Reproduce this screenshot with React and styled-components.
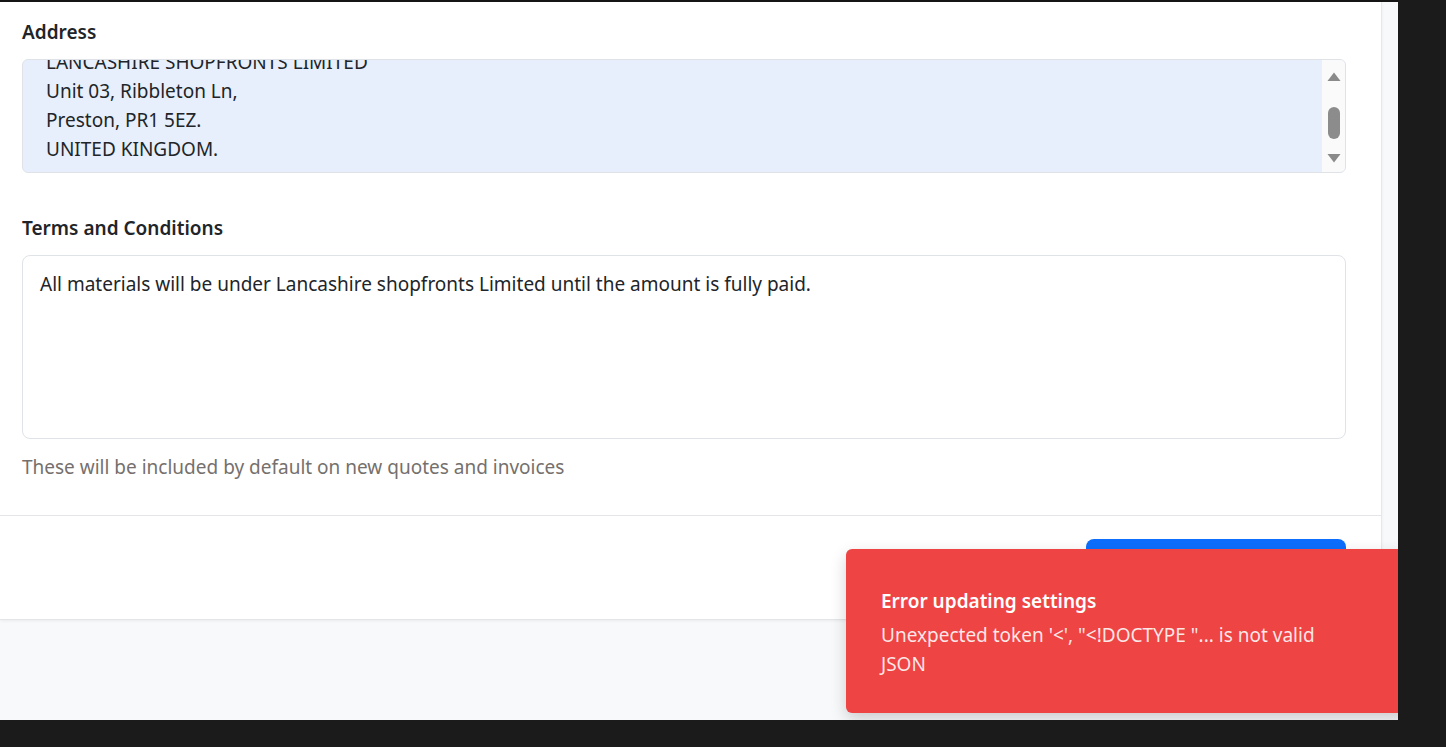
import React, { useLayoutEffect, useRef } from 'react';
import styled, { createGlobalStyle } from 'styled-components';

const GlobalStyle = createGlobalStyle`
  html, body {
    margin: 0;
    padding: 0;
    background: #1b1b1b;
    font-family: "Noto Sans", "Open Sans", Arial, sans-serif;
    color: #212529;
  }
  * { box-sizing: border-box; }
`;

const Desktop = styled.div`
  width: 1446px;
  height: 747px;
  background: #1b1b1b;
  overflow: hidden;
`;

const Window = styled.div`
  position: relative;
  width: 1398px;
  height: 720px;
  border-top: 2px solid #151515;
  background: #f8f9fb;
  overflow: hidden;
`;

const Card = styled.div`
  width: 1382px;
  background: #fff;
  border-right: 1px solid #e6e8eb;
  border-bottom: 1px solid #e3e5e8;
  box-shadow: 0 1px 3px rgba(0, 0, 0, 0.06);
`;

const Body = styled.div`
  padding: 17px 35px 34px 22px;
`;

const Label = styled.div`
  font-size: 19px;
  line-height: 27px;
  font-weight: 600;
  color: #212529;
  margin-top: ${p => p.$top || 0}px;
  margin-bottom: 13px;
`;

const AddressBox = styled.div`
  display: flex;
  height: 114px;
  border: 1px solid #dfe3e8;
  border-radius: 6px;
  overflow: hidden;
  background: #e8effc;
`;

const AddressText = styled.div`
  flex: 1;
  overflow: hidden;
  padding: 12px 23px;
  font-size: 19px;
  line-height: 29px;
  white-space: pre-line;
  color: #212529;
`;

const Scrollbar = styled.div`
  width: 23px;
  background: #fafafa;
  display: flex;
  flex-direction: column;
  align-items: center;
  padding: 12px 0 9px;
`;

const Thumb = styled.div`
  width: 12px;
  height: 32px;
  border-radius: 6px;
  background: #8c8c8c;
  margin: 25px 0 auto;
`;

const TermsBox = styled.div`
  height: 184px;
  border: 1px solid #dfe3e8;
  border-radius: 8px;
  padding: 14px 17px;
  font-size: 19px;
  line-height: 29px;
  color: #212529;
`;

const Helper = styled.div`
  margin-top: 15px;
  font-size: 19px;
  line-height: 27px;
  color: #75706d;
`;

const Footer = styled.div`
  border-top: 1px solid #e3e5e8;
  padding: 23px 35px 23px 22px;
  display: flex;
  justify-content: flex-end;
`;

const SaveButton = styled.button`
  width: 260px;
  height: 57px;
  border: none;
  border-radius: 8px;
  background: #0d6efd;
  color: #fff;
  font-family: inherit;
  font-size: 19px;
  font-weight: 600;
`;

const Toast = styled.div`
  position: absolute;
  left: 846px;
  bottom: 7px;
  width: 564px;
  padding: 37px 35px 34px;
  background: #ef4444;
  border-radius: 6px;
  box-shadow: 0 6px 16px rgba(0, 0, 0, 0.18);
  color: #fff;
`;

const ToastTitle = styled.div`
  font-size: 19px;
  line-height: 30px;
  font-weight: 600;
  margin-bottom: 5px;
`;

const ToastMessage = styled.div`
  max-width: 455px;
  font-size: 19px;
  line-height: 29px;
  color: rgba(255, 255, 255, 0.88);
`;

const Arrow = ({ down }) => (
  <svg width="14" height="10" viewBox="0 0 14 10">
    <path d={down ? 'M0.5 1h13L7 9.5z' : 'M0.5 9h13L7 0.5z'} fill="#8a8a8a" />
  </svg>
);

const address = `LANCASHIRE SHOPFRONTS LIMITED
Unit 03, Ribbleton Ln,
Preston, PR1 5EZ.
UNITED KINGDOM.`;

export default function App() {
  const ref = useRef(null);
  useLayoutEffect(() => {
    if (ref.current) ref.current.scrollTop = 24;
  }, []);

  return (
    <Desktop>
      <GlobalStyle />
      <Window>
        <Card>
          <Body>
            <Label>Address</Label>
            <AddressBox>
              <AddressText ref={ref}>{address}</AddressText>
              <Scrollbar>
                <Arrow />
                <Thumb />
                <Arrow down />
              </Scrollbar>
            </AddressBox>

            <Label $top={42}>Terms and Conditions</Label>
            <TermsBox>
              All materials will be under Lancashire shopfronts Limited until the amount is fully paid.
            </TermsBox>
            <Helper>These will be included by default on new quotes and invoices</Helper>
          </Body>
          <Footer>
            <SaveButton>Save Settings</SaveButton>
          </Footer>
        </Card>

        <Toast>
          <ToastTitle>Error updating settings</ToastTitle>
          <ToastMessage>Unexpected token '&lt;', "&lt;!DOCTYPE "... is not valid JSON</ToastMessage>
        </Toast>
      </Window>
    </Desktop>
  );
}
